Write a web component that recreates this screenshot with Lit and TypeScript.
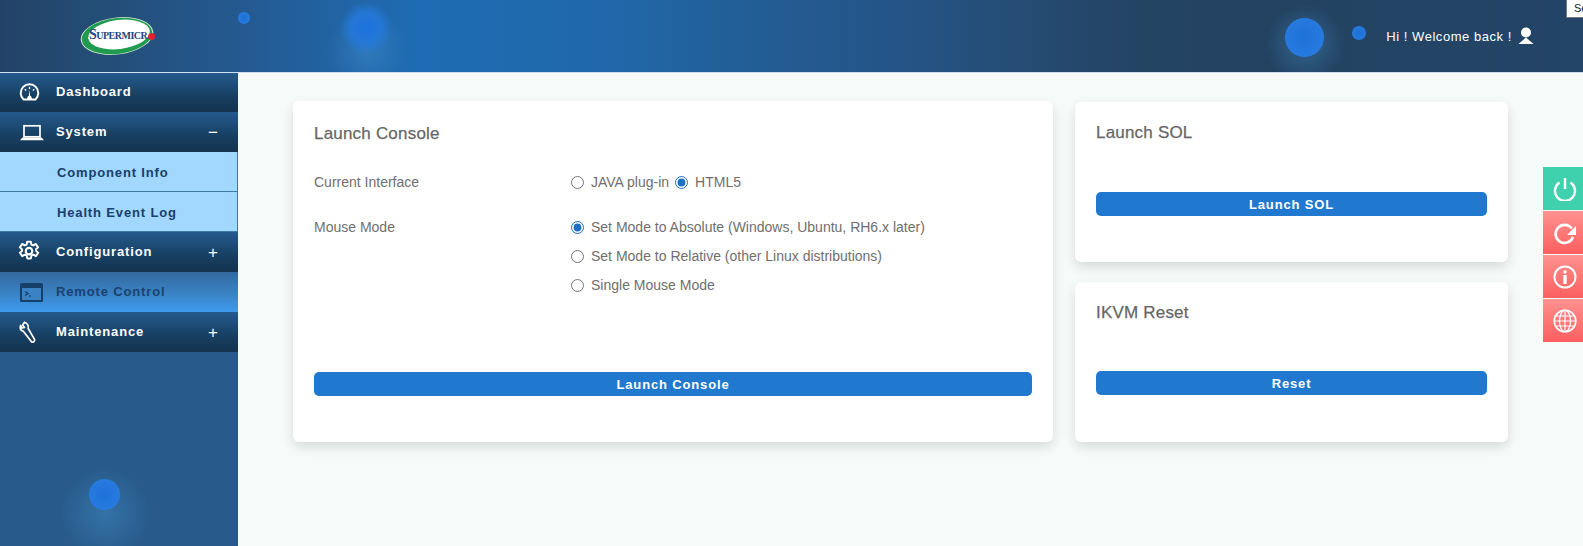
import { LitElement, css, html, svg } from 'lit';
import { customElement } from 'lit/decorators.js';

const icons = {
  gauge: svg`<path d="M3.500 18.500A8.800 8.800 0 1 1 15.500 18.500z" fill="none" stroke="#fff" stroke-width="2"/><path d="M9.500 6v2M4.800 8.300l1.300 1.200M14.200 8.300l-1.300 1.200" stroke="#fff" stroke-width="1.400"/><path d="M8.800 15l.7-6 .7 6z" fill="#fff"/><path d="M6.500 19l1.500-4h3l1.500 4z" fill="#fff"/>`,
  laptop: svg`<rect x="4" y="5.800" width="16" height="11" fill="none" stroke="#fff" stroke-width="1.700"/><path d="M2.500 17.500h19L24 20.200H0z" fill="#fff"/>`,
  gear: svg`<g transform="translate(-1.800 -0.200) scale(.9)"><path d="M10 1.500h4l.6 3.200 2.200 1 2.800-1.700 2.500 3.800-2.300 2.100.1 1.800 2.300 2.100-2.500 3.800-2.800-1.700-2.200 1-.6 3.200h-4l-.6-3.200-2.200-1-2.800 1.700-2.500-3.800 2.300-2.100-.1-1.800-2.300-2.100 2.500-3.800 2.800 1.700 2.200-1z" fill="none" stroke="#fff" stroke-width="2.200" stroke-linejoin="round" transform="translate(0 .6)"/><circle cx="12" cy="12.600" r="3.600" fill="none" stroke="#fff" stroke-width="2.400"/></g>`,
  terminal: svg`<rect x="0" y="3" width="23" height="19" rx="1.500" fill="#173f68"/><rect x="2" y="8" width="19" height="12" fill="#3a82c4"/><path d="M5 11.500l3 2-3 2" fill="none" stroke="#173f68" stroke-width="1.400"/><path d="M9 16h2" stroke="#173f68" stroke-width="1.200"/>`,
  wrench: svg`<path d="M4.500 2.200L2.500 5l2 2.500L2 8 .5 5.400C-.200 8.200 .8 10.700 3.500 11.400L11.500 21.800c1.400 1 3.800-.4 3-2.400L8.200 8.500C8.800 5.500 7 3 4.500 2.200z" fill="none" stroke="#fff" stroke-width="1.700" stroke-linejoin="round"/>`,
  power: svg`<path d="M6.500 5.500a10 10 0 1 0 11 0" fill="none" stroke="#fff" stroke-width="2.400"/><path d="M12 1v11" stroke="#fff" stroke-width="2.400"/>`,
  redo: svg`<path d="M18.800 7.500A9 9 0 1 0 20 16" fill="none" stroke="#fff" stroke-width="2.600"/><path d="M23 5v9h-9z" fill="#fff"/>`,
  info: svg`<circle cx="12" cy="12" r="10.500" fill="none" stroke="#fff" stroke-width="2"/><circle cx="12" cy="7" r="1.700" fill="#fff"/><rect x="10.300" y="10" width="3.400" height="9" fill="#fff"/>`,
  globe: svg`<circle cx="12" cy="12" r="10.800" fill="none" stroke="#fff" stroke-width="1.600"/><ellipse cx="12" cy="12" rx="5.500" ry="10.800" fill="none" stroke="#fff" stroke-width="1.200"/><path d="M12 1v22M1 12h22M2.500 7h19M2.500 17h19" stroke="#fff" stroke-width="1.200"/>`,
  user: svg`<circle cx="8" cy="5.500" r="5" fill="#fff"/><path d="M8 10.500 15.500 17H.5z" fill="#fff"/>`,
};

const menu = [
  { label: 'Dashboard', icon: icons.gauge },
  { label: 'System', icon: icons.laptop, sign: '−' },
  { label: 'Component Info', child: true },
  { label: 'Health Event Log', child: true },
  { label: 'Configuration', icon: icons.gear, sign: '+' },
  { label: 'Remote Control', icon: icons.terminal, active: true },
  { label: 'Maintenance', icon: icons.wrench, sign: '+' },
];

const actions = [
  { icon: icons.power, cls: 'green' },
  { icon: icons.redo, cls: 'red' },
  { icon: icons.info, cls: 'red' },
  { icon: icons.globe, cls: 'red' },
];

@customElement('app-root')
export class AppRoot extends LitElement {
  static styles = css`
    :host {
      display: block;
      height: 546px;
      overflow: hidden;
      position: relative;
      background: #f6faf8;
      font-family: 'Liberation Sans', Arial, sans-serif;
      color: #6b6b6b;
    }
    .header {
      position: relative;
      height: 72px;
      display: flex;
      align-items: center;
      justify-content: flex-end;
      padding-right: 49px;
      background: linear-gradient(90deg, #234366 0, #24507c 130px, #24598f 235px, #1f6cb4 420px, #2068aa 610px, #225e96 740px, #24568a 870px, #254e78 995px, #244565 1120px, #234261 1230px, #234567 100%);
      border-bottom: 1px solid #cfe0ee;
      overflow: hidden;
    }
    .logo {
      position: absolute;
      left: 78px;
      top: 14px;
      width: 80px;
      height: 44px;
    }
    .logo svg {
      position: absolute;
      inset: 0;
      width: 80px;
      height: 44px;
    }
    .logo-text {
      position: absolute;
      left: 11px;
      top: 13px;
      font: 700 14px 'Liberation Serif', serif;
      color: #24457c;
      font-variant: small-caps;
      letter-spacing: -0.5px;
      white-space: nowrap;
    }
    .logo-dot {
      position: absolute;
      left: 70px;
      top: 18.500px;
      width: 7px;
      height: 7px;
      border-radius: 50%;
      background: #e2222c;
    }
    .glow {
      position: absolute;
      border-radius: 50%;
      background: radial-gradient(circle, #1c72dc 0, #2b80e6 100%);
      opacity: 0.95;
    }
    .glow.soft {
      background: radial-gradient(circle, #1c72e0 0, #2478d8 40%, rgba(36, 120, 216, 0) 72%);
    }
    .halo {
      position: absolute;
      border-radius: 50%;
      background: radial-gradient(circle, rgba(70, 150, 210, 0.4) 0, rgba(70, 150, 210, 0) 70%);
    }
    .welcome {
      position: relative;
      display: flex;
      align-items: center;
      gap: 6px;
      color: #fff;
      font-size: 13px;
      letter-spacing: 0.55px;
    }
    .welcome svg { width: 16px; height: 18px; }
    .tip {
      position: absolute;
      top: 0;
      right: 0;
      width: 17px;
      height: 18px;
      overflow: hidden;
      white-space: nowrap;
      box-sizing: border-box;
      background: #fff;
      border-left: 1px solid #777;
      border-bottom: 1px solid #777;
      padding-left: 7px;
      font-size: 11px;
      line-height: 16px;
      color: #222;
      z-index: 2;
    }
    .page {
      display: grid;
      grid-template-columns: 238px 1fr;
      height: 473px;
    }
    .sidebar {
      position: relative;
      background: #285b8b;
      overflow: hidden;
    }
    .row {
      height: 40px;
      display: flex;
      align-items: center;
      box-sizing: border-box;
      padding-left: 20px;
      padding-right: 20px;
      font-size: 13px;
      font-weight: 700;
      letter-spacing: 0.85px;
      color: #fff;
      background: linear-gradient(180deg, #255a8c 0, #173f62 60%, #14334f 100%);
    }
    .row:first-child { height: 39px; }
    .row svg {
      width: 24px;
      height: 24px;
      margin-right: 12px;
      flex: none;
      overflow: visible;
    }
    .row .text { margin-bottom: 1px; }
    .row:first-child .text { margin-bottom: 3px; }
    .row .sign {
      margin-left: auto;
      margin-top: 1px;
      font-weight: 400;
      font-size: 17px;
      letter-spacing: 0;
    }
    .row.child {
      padding-top: 2px;
      padding-left: 57px;
      color: #17406b;
      background: #a2d7fe;
      border-bottom: 1px solid #3f79a8;
      border-right: 1px solid #3f79a8;
    }
    .row.child .text { margin-bottom: 0; }
    .row.active {
      color: #1a4270;
      background: linear-gradient(180deg, #33699c 0, #3a83c6 55%, #3f9bf0 100%);
    }
    .main {
      display: grid;
      grid-template-columns: 760px 433px;
      column-gap: 22px;
      align-content: start;
      padding: 28px 0 0 55px;
    }
    .stack {
      display: grid;
      grid-template-rows: 160px 160px;
      row-gap: 20px;
      padding-top: 1px;
    }
    .card {
      display: flex;
      flex-direction: column;
      box-sizing: border-box;
      padding: 21px 21px 46px;
      background: #fff;
      border-radius: 6px;
      box-shadow: 0 5px 12px rgba(0, 0, 0, 0.13);
    }
    .card.console { padding-top: 23px; }
    .card.reset { padding-bottom: 47px; }
    .card h2 {
      margin: 0;
      font-size: 17px;
      line-height: 20px;
      font-weight: 400;
      letter-spacing: 0.2px;
      color: #666;
      -webkit-text-stroke: 0.25px #666;
    }
    .form {
      display: grid;
      grid-template-columns: 258px 1fr;
      margin-top: 28px;
      font-size: 14px;
      color: #6f6f6f;
    }
    .opts {
      display: flex;
      align-items: center;
      height: 20px;
    }
    .form > .lbl { line-height: 20px; }
    .spaced { margin-top: 25px; }
    .col { display: flex; flex-direction: column; gap: 9px; }
    label {
      display: inline-flex;
      align-items: center;
      height: 20px;
    }
    input {
      margin: 0 7px 0 -1px;
      width: 13px;
      height: 13px;
      accent-color: #1e6fc0;
    }
    .opts label + label { margin-left: 7px; }
    button {
      margin-top: auto;
      height: 24px;
      width: 100%;
      border: none;
      border-radius: 5px;
      background: #2079cf;
      color: #fff;
      font: 700 13px 'Liberation Sans', Arial, sans-serif;
      letter-spacing: 0.85px;
      padding: 0;
    }
    .actions {
      position: absolute;
      right: 0;
      top: 167px;
      width: 40px;
      display: flex;
      flex-direction: column;
      gap: 1px;
    }
    .act {
      height: 43px;
      display: flex;
      align-items: center;
      justify-content: center;
      padding-left: 3px;
    }
    .act svg { width: 24px; height: 24px; }
    .act.green { background: #3fd1ae; }
    .act.red { background: linear-gradient(180deg, #ff9290 0, #fd5f5f 100%); }
  `;

  render() {
    return html`
      <div class="header">
        <div class="logo">
          <svg viewBox="0 0 80 44">
            <ellipse cx="39" cy="22" rx="36.500" ry="18.500" transform="rotate(-7 39 22)" fill="#cfe6cf" />
            <ellipse cx="39" cy="22" rx="35.500" ry="17.800" transform="rotate(-7 39 22)" fill="#1f9a4e" />
            <ellipse cx="41" cy="20.500" rx="31" ry="14.500" transform="rotate(-7 41 20.500)" fill="#fff" />
          </svg>
          <span class="logo-text">Supermicr</span>
          <span class="logo-dot"></span>
        </div>
        <span class="halo" style="left:326px;top:10px;width:82px;height:82px"></span>
        <span class="glow" style="left:238px;top:12px;width:12px;height:12px"></span>
        <span class="glow soft" style="left:340px;top:2px;width:52px;height:52px"></span>
        <span class="halo" style="left:1265px;top:4px;width:80px;height:80px"></span>
        <span class="glow" style="left:1285px;top:18px;width:39px;height:39px"></span>
        <span class="glow" style="left:1352px;top:26px;width:14px;height:14px"></span>
        <div class="welcome">
          Hi ! Welcome back !
          <svg viewBox="0 0 16 18">${icons.user}</svg>
        </div>
      </div>
      <div class="tip">Se</div>
      <div class="page">
        <nav class="sidebar">
          ${menu.map(
            (m) => html`<div class="row ${m.child ? 'child' : ''} ${m.active ? 'active' : ''}">
              ${m.icon ? html`<svg viewBox="0 0 24 24">${m.icon}</svg>` : ''}
              <span class="text">${m.label}</span>
              ${m.sign ? html`<span class="sign">${m.sign}</span>` : ''}
            </div>`
          )}
          <span class="halo" style="left:60px;top:395px;width:90px;height:90px"></span>
          <span class="glow" style="left:89px;top:406px;width:31px;height:31px"></span>
        </nav>
        <main class="main">
          <section class="card console">
            <h2>Launch Console</h2>
            <div class="form">
              <div class="lbl">Current Interface</div>
              <div class="opts">
                <label><input type="radio" name="iface" />JAVA plug-in</label>
                <label><input type="radio" name="iface" checked />HTML5</label>
              </div>
              <div class="lbl spaced">Mouse Mode</div>
              <div class="col spaced">
                <label><input type="radio" name="mouse" checked />Set Mode to Absolute (Windows, Ubuntu, RH6.x later)</label>
                <label><input type="radio" name="mouse" />Set Mode to Relative (other Linux distributions)</label>
                <label><input type="radio" name="mouse" />Single Mouse Mode</label>
              </div>
            </div>
            <button type="button">Launch Console</button>
          </section>
          <div class="stack">
            <section class="card">
              <h2>Launch SOL</h2>
              <button type="button">Launch SOL</button>
            </section>
            <section class="card reset">
              <h2>IKVM Reset</h2>
              <button type="button">Reset</button>
            </section>
          </div>
        </main>
      </div>
      <div class="actions">
        ${actions.map(
          (a) => html`<div class="act ${a.cls}"><svg viewBox="0 0 24 24">${a.icon}</svg></div>`
        )}
      </div>
    `;
  }
}
